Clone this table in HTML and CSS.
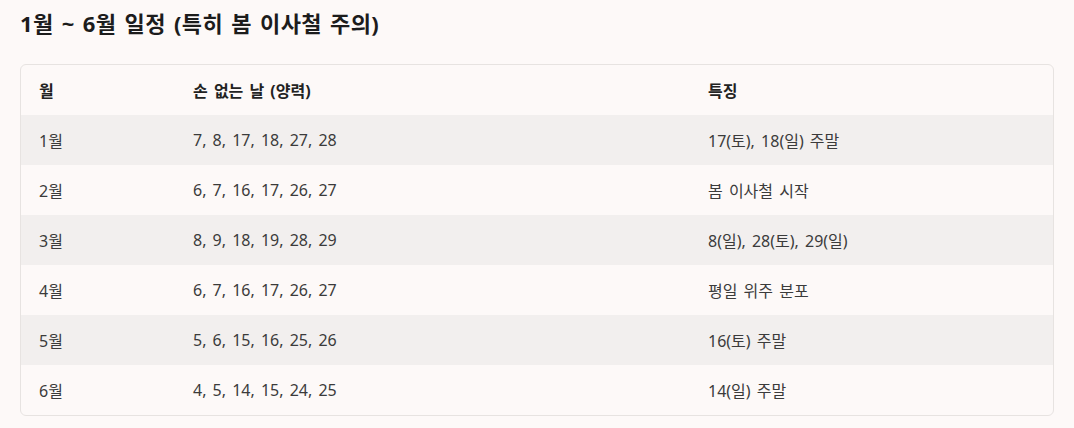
FILE: index.html
```html
<!DOCTYPE html>
<html lang="ko">
<head>
<meta charset="utf-8">
<link rel="stylesheet" href="styles.css">
</head>
<body>
<h2 class="title">1월 ~ 6월 일정 (특히 봄 이사철 주의)</h2>
<div class="table-wrap">
<table class="schedule">
<colgroup><col class="c1"><col class="c2"><col class="c3"></colgroup>
<thead>
<tr><th>월</th><th>손 없는 날 (양력)</th><th>특징</th></tr>
</thead>
<tbody>
<tr><td>1월</td><td>7, 8, 17, 18, 27, 28</td><td>17(토), 18(일) 주말</td></tr>
<tr><td>2월</td><td>6, 7, 16, 17, 26, 27</td><td>봄 이사철 시작</td></tr>
<tr><td>3월</td><td>8, 9, 18, 19, 28, 29</td><td>8(일), 28(토), 29(일)</td></tr>
<tr><td>4월</td><td>6, 7, 16, 17, 26, 27</td><td>평일 위주 분포</td></tr>
<tr><td>5월</td><td>5, 6, 15, 16, 25, 26</td><td>16(토) 주말</td></tr>
<tr><td>6월</td><td>4, 5, 14, 15, 24, 25</td><td>14(일) 주말</td></tr>
</tbody>
</table>
</div>
</body>
</html>
```
FILE: styles.css
```css
html, body {
  margin: 0;
  background: #fdf9f8;
}
body {
  padding: 8px 20px 0 20px;
  font-family: "Noto Sans", "Noto Sans CJK KR", sans-serif;
  color: #3b3b3b;
}
.title {
  margin: 0 0 26px 0;
  font-size: 22px;
  line-height: 30px;
  font-weight: 700;
  color: #1c1c1c;
  word-spacing: 2px;
  letter-spacing: 0.4px;
}
.table-wrap {
  border: 1px solid #e7e3e1;
  border-radius: 6px;
  overflow: hidden;
  background: #fdf9f8;
}
.schedule {
  width: 100%;
  border-collapse: collapse;
  table-layout: fixed;
  font-size: 16px;
  word-spacing: 2px;
}
.c1 { width: 154px; }
.c2 { width: 515px; }
.schedule th, .schedule td {
  height: 50px;
  padding: 0 18px;
  text-align: left;
  vertical-align: middle;
  box-sizing: border-box;
}
.schedule th {
  font-weight: 700;
  color: #222;
}
.schedule tbody tr:nth-child(odd) {
  background: #f2efee;
}
```
